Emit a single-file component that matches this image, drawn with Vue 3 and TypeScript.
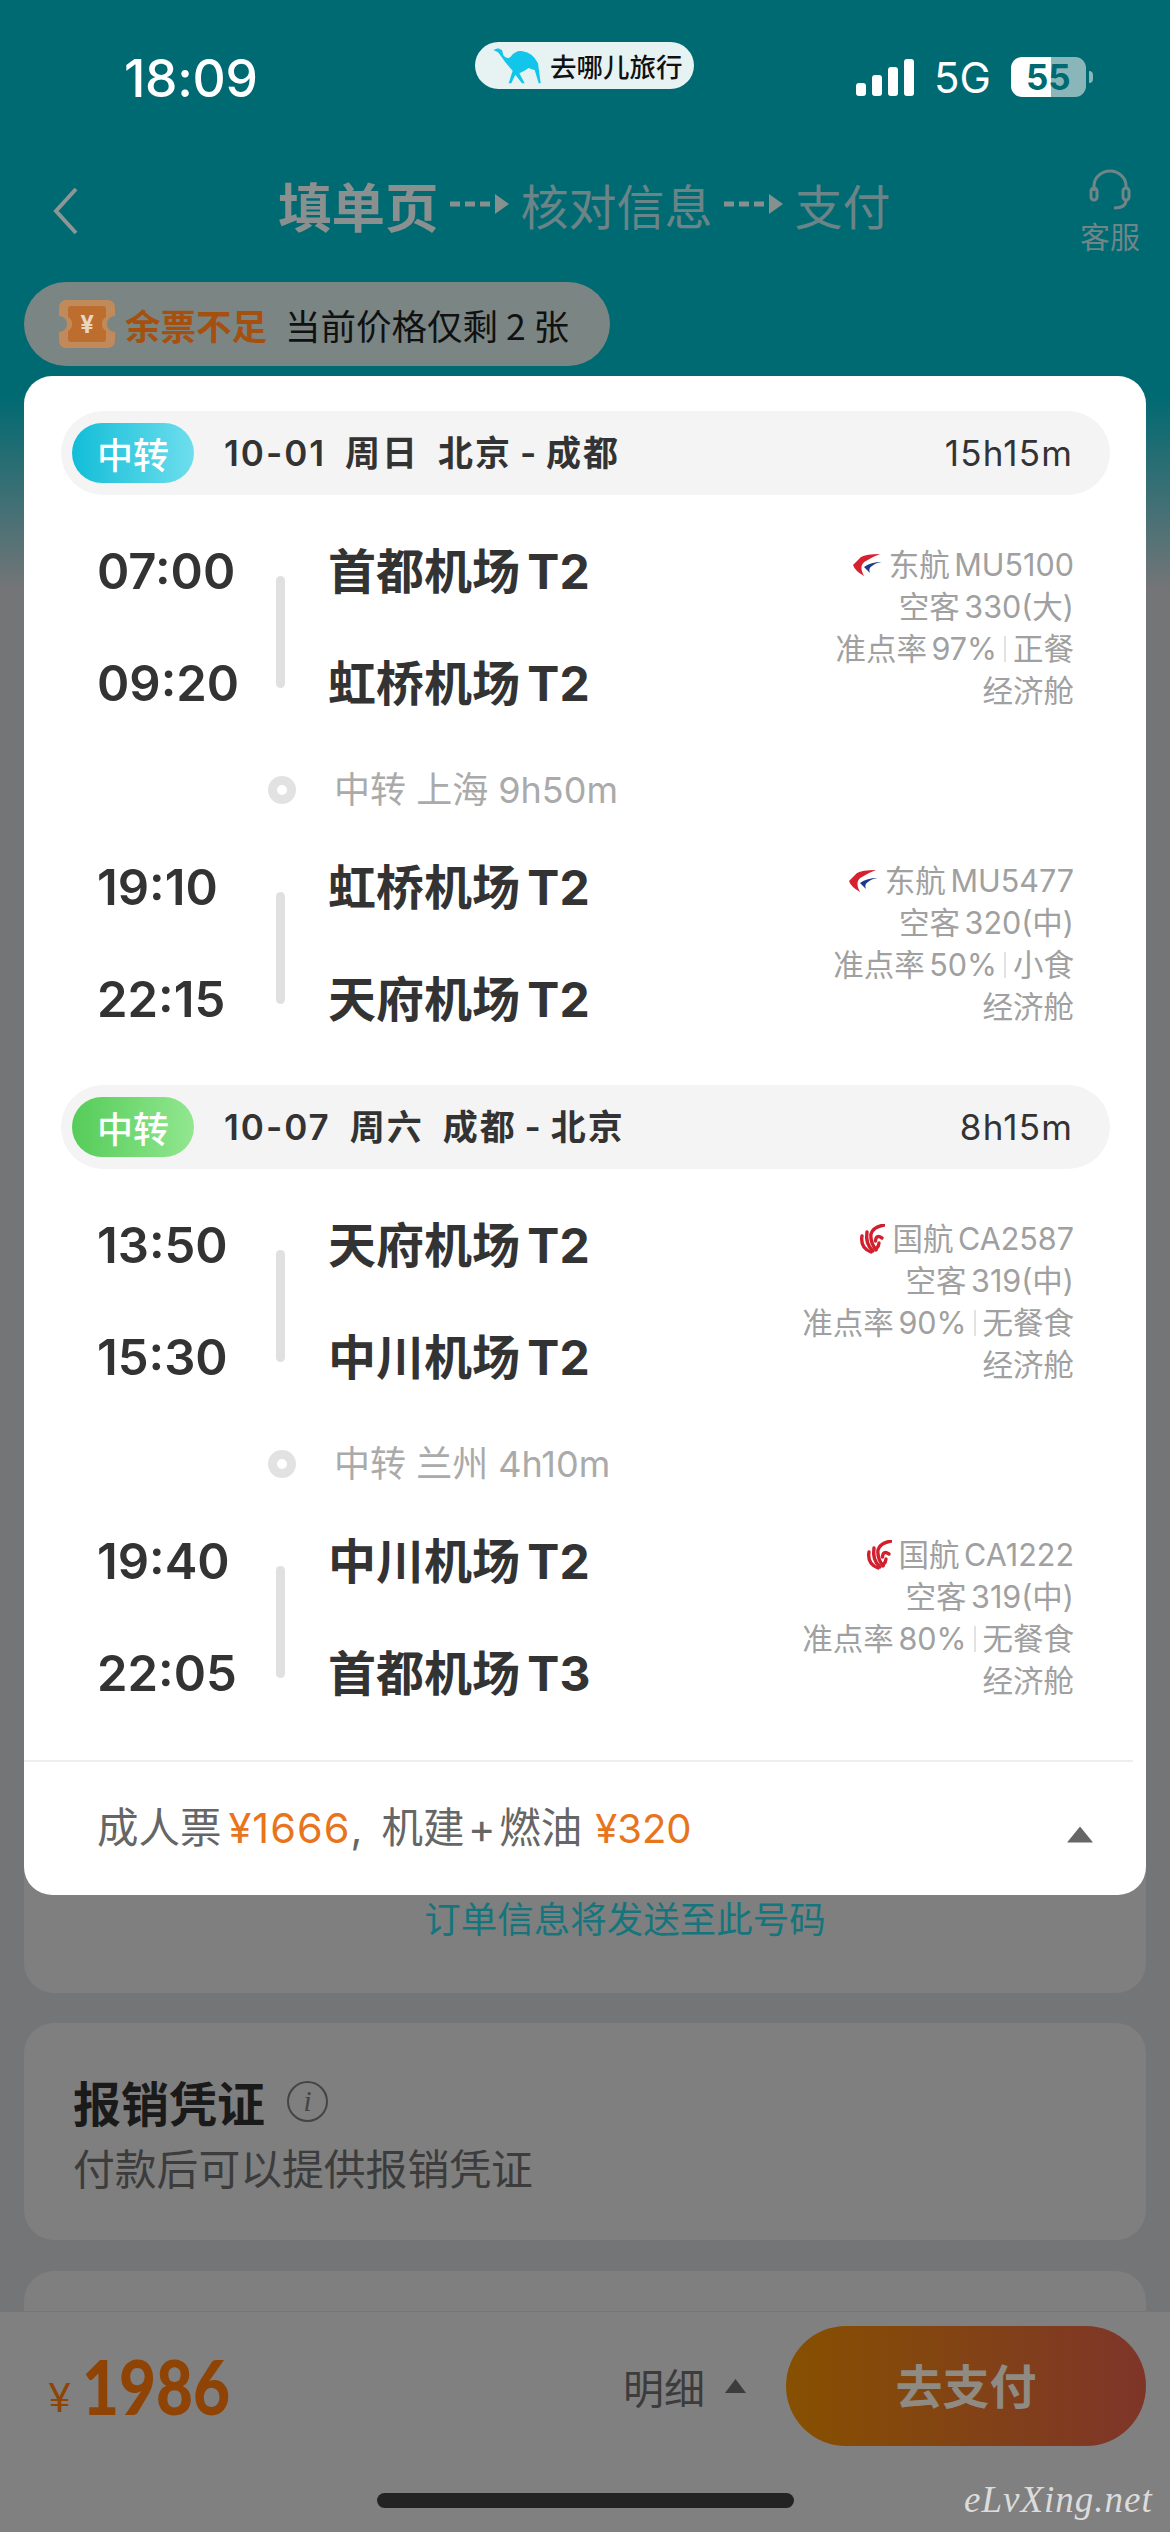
<script setup lang="ts">
interface Leg {
  dep: string
  arr: string
  from: string
  to: string
  airline: 'mu' | 'ca'
  flight: string
  plane: string
  rate: string
  meal: string
}
interface Trip {
  tone: string
  date: string
  day: string
  cities: string
  total: string
  legs: Leg[]
  via: string
}
const trips: Trip[] = [
  {
    tone: 'blue',
    date: '10-01',
    day: '周日',
    cities: '北京 - 成都',
    total: '15h15m',
    via: '中转 上海 9h50m',
    legs: [
      { dep: '07:00', arr: '09:20', from: '首都机场 T2', to: '虹桥机场 T2', airline: 'mu', flight: '东航 MU5100', plane: '空客 330(大)', rate: '准点率 97%', meal: '正餐' },
      { dep: '19:10', arr: '22:15', from: '虹桥机场 T2', to: '天府机场 T2', airline: 'mu', flight: '东航 MU5477', plane: '空客 320(中)', rate: '准点率 50%', meal: '小食' },
    ],
  },
  {
    tone: 'green',
    date: '10-07',
    day: '周六',
    cities: '成都 - 北京',
    total: '8h15m',
    via: '中转 兰州 4h10m',
    legs: [
      { dep: '13:50', arr: '15:30', from: '天府机场 T2', to: '中川机场 T2', airline: 'ca', flight: '国航 CA2587', plane: '空客 319(中)', rate: '准点率 90%', meal: '无餐食' },
      { dep: '19:40', arr: '22:05', from: '中川机场 T2', to: '首都机场 T3', airline: 'ca', flight: '国航 CA1222', plane: '空客 319(中)', rate: '准点率 80%', meal: '无餐食' },
    ],
  },
]
</script>

<template>
  <div class="screen">
    <header class="status">
      <span class="clock">18:09</span>
      <div class="app-pill">
        <svg class="camel" viewBox="0 0 142 108" width="48" height="36">
          <path fill="#12c5ea" d="M0 6 L14 1 L26 6 L30 22 Q40 36 52 26 Q68 6 88 10 Q118 14 134 46 L142 106 L136 106 L124 66 Q116 64 106 60 Q92 70 78 76 L94 106 L86 106 L66 80 L54 106 L46 106 L58 68 Q40 50 20 20 L14 13 Z" />
        </svg>
        <span>去哪儿旅行</span>
      </div>
      <div class="sys">
        <svg width="58" height="37" viewBox="0 0 58 37">
          <rect x="0" y="24" width="10" height="13" rx="3" fill="#fff" />
          <rect x="16" y="16" width="10" height="21" rx="3" fill="#fff" />
          <rect x="32" y="8" width="10" height="29" rx="3" fill="#fff" />
          <rect x="48" y="0" width="10" height="37" rx="3" fill="#fff" />
        </svg>
        <span class="net">5G</span>
        <div class="battery"><span>55</span></div>
        <i class="battery-cap"></i>
      </div>
    </header>

    <nav class="nav">
      <svg class="back" width="26" height="48" viewBox="0 0 26 48">
        <path d="M23 2 L3 24 L23 46" fill="none" stroke="#8d9595" stroke-width="4" />
      </svg>
      <div class="steps">
        <b>填单页</b>
        <svg class="dash" width="60" height="22" viewBox="0 0 60 22">
          <path d="M0 11 H44" stroke="#85908f" stroke-width="5" stroke-dasharray="10 5" />
          <path d="M45 1 L59 11 L45 21 Z" fill="#85908f" />
        </svg>
        <span>核对信息</span>
        <svg class="dash" width="60" height="22" viewBox="0 0 60 22">
          <path d="M0 11 H44" stroke="#85908f" stroke-width="5" stroke-dasharray="10 5" />
          <path d="M45 1 L59 11 L45 21 Z" fill="#85908f" />
        </svg>
        <span>支付</span>
      </div>
      <div class="help">
        <svg width="44" height="42" viewBox="0 0 44 42">
          <path d="M6 22 V17 a16 15 0 0 1 32 0 V20" fill="none" stroke="#6f8689" stroke-width="3" />
          <rect x="3" y="19" width="6" height="12" rx="3" fill="none" stroke="#6f8689" stroke-width="3" />
          <rect x="35" y="19" width="6" height="12" rx="3" fill="none" stroke="#6f8689" stroke-width="3" />
          <path d="M38 31 q0 8 -12 8" fill="none" stroke="#6f8689" stroke-width="3" />
        </svg>
        <span>客服</span>
      </div>
    </nav>

    <div class="tip">
      <svg width="56" height="48" viewBox="0 0 56 48">
        <path fill="#c08a5a" d="M7 0 H49 a7 7 0 0 1 7 7 V16 a8 8 0 0 0 0 16 V41 a7 7 0 0 1 -7 7 H7 a7 7 0 0 1 -7 -7 V32 a8 8 0 0 0 0 -16 V7 a7 7 0 0 1 7 -7Z" />
        <path fill="#bd6d2e" d="M12 6 H44 a3 3 0 0 1 3 3 V17 a8 8 0 0 0 0 14 V39 a3 3 0 0 1 -3 3 H12 a3 3 0 0 1 -3 -3 V31 a8 8 0 0 0 0 -14 V9 a3 3 0 0 1 3 -3Z" />
        <text x="28" y="33" text-anchor="middle" fill="#e8d6c4" font-size="24" font-weight="700" font-family="Inter, sans-serif">¥</text>
      </svg>
      <strong>余票不足</strong>
      <span>当前价格仅剩 2 张</span>
    </div>

    <section class="under contact"><p>订单信息将发送至此号码</p></section>
    <section class="under invoice">
      <h3>报销凭证 <i class="info">i</i></h3>
      <p>付款后可以提供报销凭证</p>
    </section>
    <section class="under rest"></section>

    <div class="modal">
      <template v-for="(trip, t) in trips" :key="t">
        <div class="route" :class="{ second: t === 1 }">
          <span class="tag" :class="trip.tone">中转</span>
          <span class="route-text">
            <span>{{ trip.date }}</span>
            <span>{{ trip.day }}</span>
            <span class="cities">{{ trip.cities }}</span>
          </span>
          <span class="route-total">{{ trip.total }}</span>
        </div>
        <template v-for="(leg, l) in trip.legs" :key="l">
          <div class="leg">
            <div class="times"><span>{{ leg.dep }}</span><span>{{ leg.arr }}</span></div>
            <i class="line"></i>
            <div class="ports"><span>{{ leg.from }}</span><span>{{ leg.to }}</span></div>
            <div class="meta">
              <div class="flight">
                <svg v-if="leg.airline === 'mu'" class="logo" width="30" height="24" viewBox="0 0 30 24">
                  <path fill="#d8202f" d="M28 1 Q14 1 9 4 L1 12 Q3 18 12 23 Q6 12 14 8 Q20 4 28 1Z" />
                  <path fill="#1b3a8c" d="M29.5 9 Q19 9 12 14 Q14 16 18 20 Q16 15 20 13 Q23 10 29.5 9Z" />
                </svg>
                <svg v-else class="logo" width="26" height="30" viewBox="0 0 26 30">
                  <g fill="none" stroke="#d11f2d" stroke-width="3.4" stroke-linecap="round">
                    <path d="M3 12 Q1 24 12 28" />
                    <path d="M8 8 Q6 20 14 27" />
                    <path d="M25 1 Q14 3 12 10 Q11 18 17 26" />
                    <path d="M23 14 Q17 10 16.500 17" />
                    <path d="M17 25 Q20 22 20 19" />
                  </g>
                </svg>
                <span>{{ leg.flight }}</span>
              </div>
              <div>{{ leg.plane }}</div>
              <div class="rate"><span>{{ leg.rate }}</span><i></i><span>{{ leg.meal }}</span></div>
              <div>经济舱</div>
            </div>
          </div>
          <div v-if="l === 0" class="via"><i></i><span>{{ trip.via }}</span></div>
        </template>
      </template>
      <div class="price">
        <div class="price-text">成人票<em class="adult">¥1666</em><span class="comma">,</span><span class="fees">机建 + 燃油</span><em class="fee">¥320</em></div>
        <i class="tri"></i>
      </div>
    </div>

    <footer class="bar">
      <div class="total"><small>¥</small><b>1986</b></div>
      <div class="detail"><span>明细</span><i></i></div>
      <button class="pay">去支付</button>
      <span class="home"></span>
      <span class="mark">eLvXing.net</span>
    </footer>
  </div>
</template>

<style scoped>
.screen {
  position: relative;
  width: 1170px;
  height: 2532px;
  overflow: hidden;
  display: flex;
  flex-direction: column;
  background: linear-gradient(#006a72 0, #006a72 395px, #747577 590px);
  font-family: Inter, "Noto Sans CJK SC", sans-serif;
}
.status {
  height: 130px;
  flex: none;
  display: grid;
  grid-template-columns: 351px 381px 1fr;
  padding-left: 124px;
  align-items: start;
}
.clock {
  margin-top: 52px;
  font-size: 51.5px;
  line-height: 52px;
  font-weight: 500;
  color: #fff;
  letter-spacing: -0.3px;
}
.app-pill {
  margin-top: 42px;
  width: 219px;
  height: 47px;
  border-radius: 24px;
  background: #e7f2f3;
  display: flex;
  align-items: center;
  padding-left: 18px;
  box-sizing: border-box;
  gap: 9px;
  font-family: "Noto Sans CJK SC", sans-serif;
  font-size: 26.5px;
  font-weight: 500;
  color: #111;
  white-space: nowrap;
}
.camel { flex: none; }
.sys {
  margin-top: 57px;
  display: flex;
  align-items: flex-start;
  color: #fff;
}
.sys svg { margin-top: 2px; }
.net {
  margin-left: 20px;
  font-size: 42px;
  line-height: 42px;
  font-weight: 400;
}
.battery {
  margin-left: 20px;
  width: 75px;
  height: 40px;
  border-radius: 11px;
  background: linear-gradient(90deg, #fff 0, #fff 40px, #8ab6ba 40px);
  text-align: center;
  font-size: 35px;
  line-height: 40px;
  font-weight: 700;
  color: #006a72;
  letter-spacing: 0;
}
.battery-cap {
  margin: 14px 0 0 3px;
  width: 4px;
  height: 12px;
  border-radius: 0 4px 4px 0;
  background: #8ab6ba;
}
.nav {
  height: 152px;
  flex: none;
  display: flex;
  align-items: flex-start;
  padding-left: 53px;
  box-sizing: border-box;
  position: relative;
}
.back { margin-top: 57px; flex: none; }
.steps {
  margin-left: 199px;
  margin-top: 44px;
  height: 60px;
  display: flex;
  align-items: center;
  gap: 11px;
  font-family: "Noto Sans CJK SC", sans-serif;
  font-size: 48px;
  color: #6a8488;
  white-space: nowrap;
}
.steps b {
  font-size: 53.5px;
  font-weight: 700;
  color: #8a8f8f;
}
.help {
  margin-left: auto;
  width: 120px;
  margin-top: 39px;
  display: flex;
  flex-direction: column;
  align-items: center;
  font-family: "Noto Sans CJK SC", sans-serif;
  font-size: 30px;
  line-height: 34px;
  color: #6f8689;
  gap: 7px;
}
.tip {
  height: 84px;
  width: 586px;
  margin-left: 24px;
  flex: none;
  box-sizing: border-box;
  padding-left: 35px;
  border-radius: 42px;
  background: #7a8584;
  display: flex;
  align-items: center;
  font-family: "Noto Sans CJK SC", sans-serif;
  font-size: 35px;
  white-space: nowrap;
}
.tip strong {
  margin-left: 10px;
  font-size: 35.5px;
  font-weight: 700;
  color: #a6500f;
}
.tip span {
  margin-left: 18px;
  font-size: 35.5px;
  color: #111;
}
.under {
  margin: 0 24px;
  background: #7f7f7f;
  border-radius: 30px;
  flex: none;
  font-family: "Noto Sans CJK SC", sans-serif;
}
.contact {
  height: 1547px;
  margin-top: 80px;
  display: flex;
  flex-direction: column;
  justify-content: flex-end;
  align-items: center;
  box-sizing: border-box;
  padding: 0 0 50px 80px;
}
.contact p {
  margin: 0;
  font-size: 36.5px;
  line-height: 50px;
  color: #15757c;
}
.invoice {
  height: 217px;
  margin-top: 30px;
  box-sizing: border-box;
  padding: 46px 49px 0;
}
.invoice h3 {
  margin: 0;
  display: flex;
  align-items: center;
  gap: 22px;
  font-size: 48px;
  line-height: 64px;
  font-weight: 700;
  color: #1a1a1a;
}
.info {
  width: 37px;
  height: 37px;
  border: 2px solid #444;
  border-radius: 50%;
  display: flex;
  align-items: center;
  justify-content: center;
  font-family: "Liberation Serif", serif;
  font-style: italic;
  font-size: 29px;
  font-weight: 400;
  color: #444;
}
.invoice p {
  margin: 5px 0 0;
  font-size: 41.8px;
  line-height: 58px;
  color: #3c3c3c;
  white-space: nowrap;
}
.rest {
  height: 120px;
  margin-top: 31px;
}

.modal {
  position: absolute;
  left: 24px;
  top: 376px;
  width: 1122px;
  height: 1519px;
  background: #fff;
  border-radius: 28px;
  box-sizing: border-box;
  padding-top: 35px;
}
.route {
  margin-left: 37px;
  width: 1049px;
  height: 84px;
  border-radius: 42px;
  background: #f4f4f4;
  display: flex;
  align-items: center;
  padding: 0 37px 0 11px;
  box-sizing: border-box;
  margin-bottom: 49px;
}
.route.second { margin-top: 57px; }
.tag {
  width: 122px;
  height: 60px;
  border-radius: 30px;
  display: flex;
  align-items: center;
  justify-content: center;
  font-family: "Noto Sans CJK SC", sans-serif;
  font-size: 36px;
  font-weight: 500;
  color: #fff;
}
.tag.blue { background: linear-gradient(90deg, #12bdd8, #6edeed); }
.tag.green { background: linear-gradient(90deg, #55cc5a, #92e78f); }
.route-text {
  margin-left: 30px;
  display: flex;
  align-items: baseline;
  gap: 19px;
  font-size: 35px;
  line-height: 50px;
  font-weight: 600;
  color: #333;
  letter-spacing: 2px;
  white-space: nowrap;
}
.cities { word-spacing: -3px; }
.route-total {
  margin-left: auto;
  font-size: 35px;
  letter-spacing: 1.2px;
  color: #333;
}
.leg {
  display: flex;
  height: 168px;
  margin-left: 73px;
  width: 977px;
}
.times, .ports {
  display: flex;
  flex-direction: column;
  justify-content: space-between;
}
.times {
  width: 179px;
  flex: none;
  font-size: 49px;
  line-height: 56px;
  font-weight: 600;
  color: #333;
}
.line {
  width: 9px;
  height: 112px;
  margin-top: 32px;
  border-radius: 5px;
  background: #e0e0e0;
  flex: none;
}
.ports {
  margin-left: 43px;
  font-size: 48px;
  line-height: 56px;
  font-weight: 700;
  color: #333;
  white-space: nowrap;
  word-spacing: -4px;
}
.meta {
  margin-left: auto;
  text-align: right;
  font-size: 30.5px;
  line-height: 42px;
  color: #a0a0a0;
  white-space: nowrap;
  word-spacing: -4px;
}
.flight {
  display: flex;
  align-items: center;
  justify-content: flex-end;
  gap: 7px;
}
.rate {
  display: flex;
  align-items: center;
  justify-content: flex-end;
  gap: 7px;
}
.rate i {
  width: 2px;
  height: 26px;
  background: #e2e2e2;
}
.via {
  height: 56px;
  margin: 50px 0 42px;
  display: flex;
  align-items: center;
  padding-left: 244px;
  font-size: 36px;
  line-height: 56px;
  color: #aaa;
  white-space: nowrap;
}
.via i {
  width: 28px;
  height: 28px;
  box-sizing: border-box;
  border: 9px solid #e2e2e2;
  border-radius: 50%;
  background: #fff;
  margin-right: 38px;
}
.price {
  position: absolute;
  left: 0;
  right: 13px;
  top: 1384px;
  height: 135px;
  border-top: 2px solid #eee;
  box-sizing: border-box;
  display: flex;
  align-items: center;
  padding: 0 40px 8px 73px;
}
.price-text {
  font-size: 41.5px;
  color: #666;
  white-space: nowrap;
}
.price-text em {
  font-style: normal;
  color: #e8741c;
  letter-spacing: 1px;
}
.price-text em.adult { margin-left: 7px; }
.price-text em.fee {
  margin-left: 13px;
  letter-spacing: 0;
  font-size: 40px;
}
.comma { margin-right: 19px; }
.fees { word-spacing: -8px; }
.tri {
  margin-left: auto;
  width: 26px;
  height: 16px;
  background: #666;
  clip-path: polygon(50% 0, 100% 100%, 0 100%);
  margin-top: 20px;
}

.bar {
  position: absolute;
  left: 0;
  right: 0;
  bottom: 0;
  height: 221px;
  background: #808080;
  border-top: 1px solid #767676;
  box-sizing: border-box;
  display: flex;
  align-items: flex-start;
  padding-left: 48px;
}
.total {
  margin-top: 31px;
  display: flex;
  align-items: flex-end;
  font-family: Lato, sans-serif;
  color: #8f4304;
  height: 76px;
}
.total small {
  font-size: 40px;
  line-height: 44px;
  font-weight: 400;
}
.total b {
  display: inline-block;
  font-size: 76px;
  line-height: 80px;
  font-weight: 900;
  transform: scaleX(0.84);
  transform-origin: left center;
  margin-left: 11px;
  margin-bottom: -7px;
}
.detail {
  position: absolute;
  left: 623px;
  top: 46px;
  display: flex;
  align-items: center;
  gap: 20px;
  font-family: "Noto Sans CJK SC", sans-serif;
  font-size: 41px;
  line-height: 56px;
  color: #3c3c3c;
}
.detail i {
  width: 21px;
  height: 14px;
  background: #3c3c3c;
  clip-path: polygon(50% 0, 100% 100%, 0 100%);
}
.pay {
  position: absolute;
  left: 786px;
  top: 14px;
  width: 360px;
  height: 120px;
  border: 0;
  padding: 0 0 6px;
  border-radius: 60px;
  background: linear-gradient(90deg, #875000, #7e3529);
  font-family: "Noto Sans CJK SC", sans-serif;
  font-size: 47px;
  font-weight: 600;
  color: #8f8a82;
}
.home {
  position: absolute;
  left: 377px;
  top: 181px;
  width: 417px;
  height: 15px;
  border-radius: 8px;
  background: #232323;
}
.mark {
  position: absolute;
  left: 964px;
  top: 166px;
  font-family: "Liberation Serif", serif;
  font-style: italic;
  font-size: 37px;
  line-height: 44px;
  color: #dcdcdc;
  letter-spacing: 1px;
}
</style>
